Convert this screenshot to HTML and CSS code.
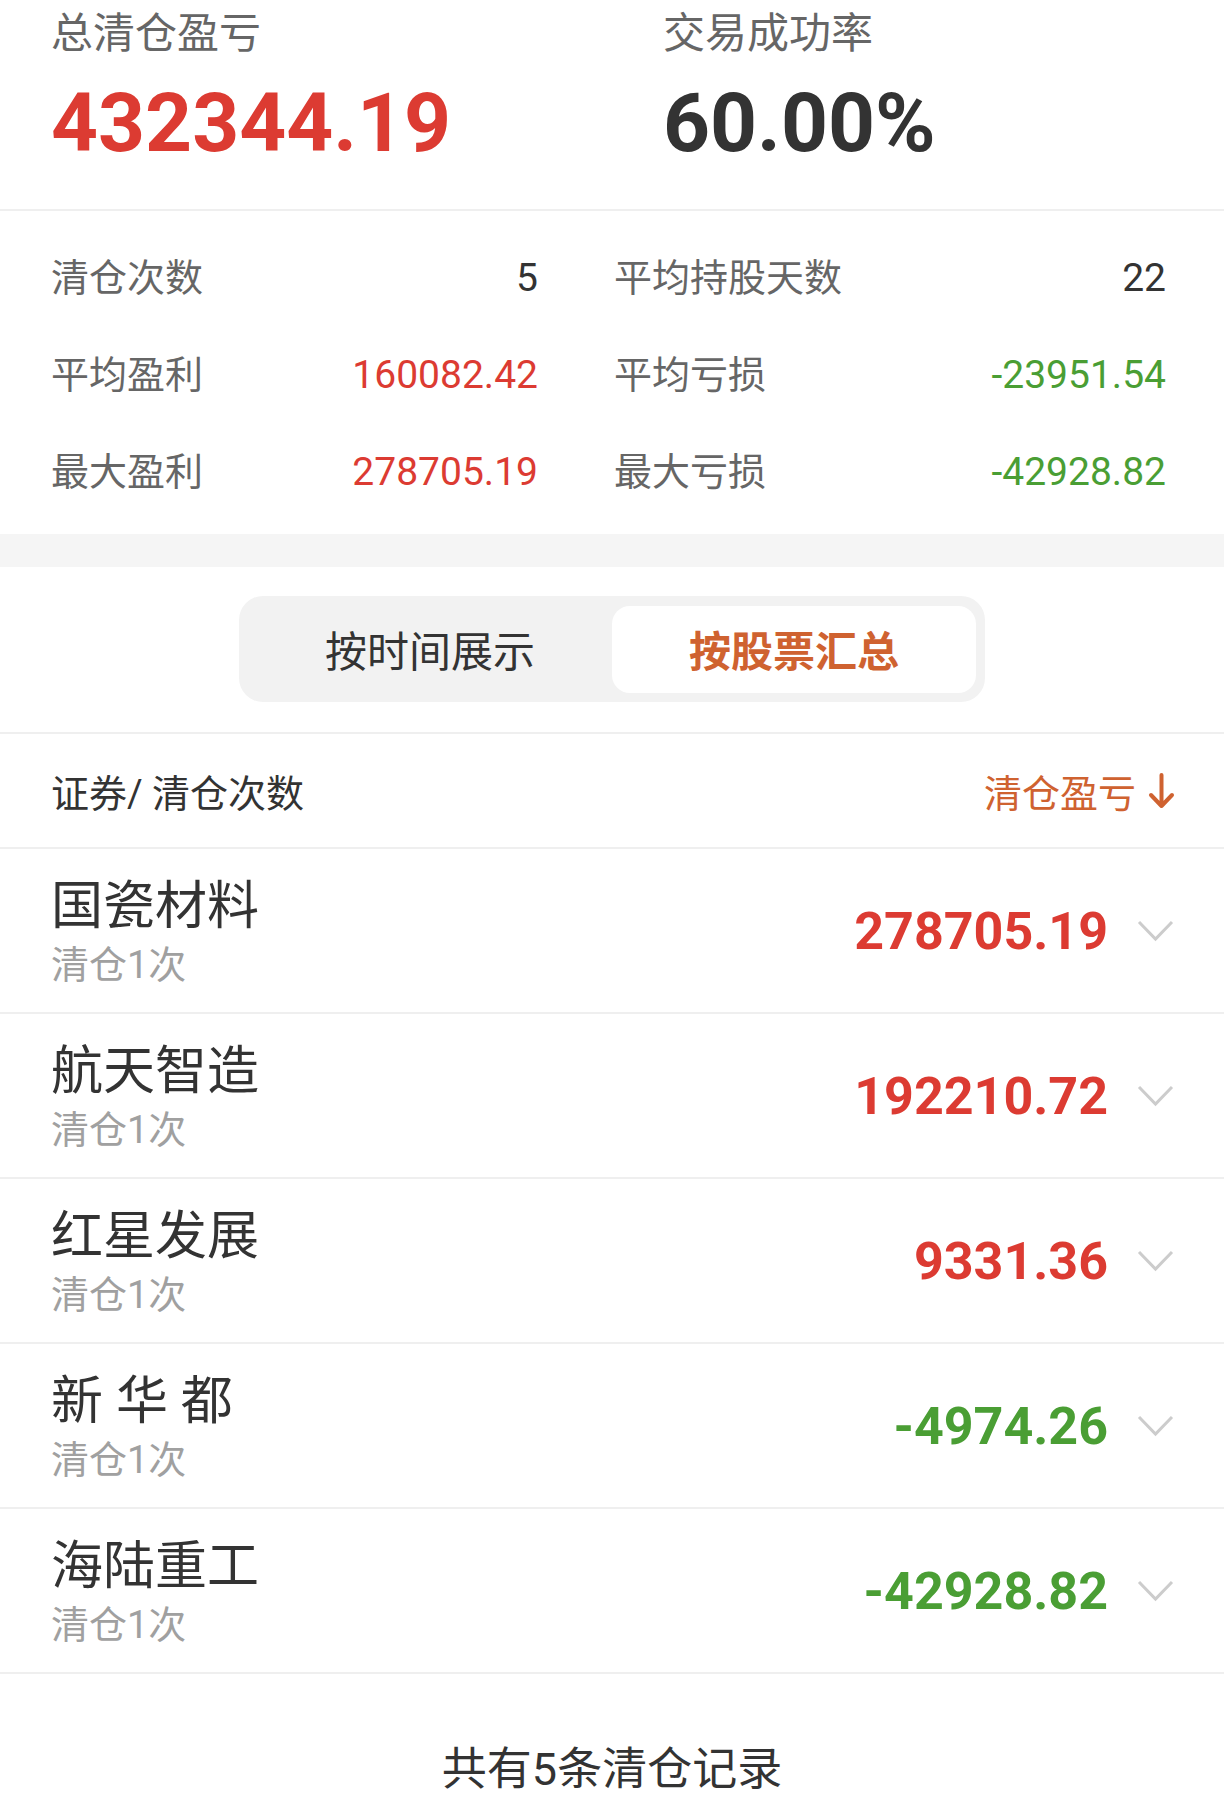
FILE: index.html
```html
<!DOCTYPE html>
<html lang="zh-CN">
<head>
  <meta charset="UTF-8" />
  <title>清仓记录</title>
  <link rel="stylesheet" href="styles.css">
</head>
<body>

<div id="summary">
  <div class="sum-item">
    <div class="sum-label">总清仓盈亏</div>
    <div class="sum-value up">432344.19</div>
  </div>
  <div class="sum-item">
    <div class="sum-label">交易成功率</div>
    <div class="sum-value">60.00%</div>
  </div>
</div>

<div id="stats">
  <div class="stat"><span class="stat-label">清仓次数</span><span class="stat-value">5</span></div>
  <div class="stat"><span class="stat-label">平均持股天数</span><span class="stat-value">22</span></div>
  <div class="stat"><span class="stat-label">平均盈利</span><span class="stat-value up">160082.42</span></div>
  <div class="stat"><span class="stat-label">平均亏损</span><span class="stat-value down">-23951.54</span></div>
  <div class="stat"><span class="stat-label">最大盈利</span><span class="stat-value up">278705.19</span></div>
  <div class="stat"><span class="stat-label">最大亏损</span><span class="stat-value down">-42928.82</span></div>
</div>

<div class="gap"></div>

<div id="tabs-wrap">
  <div id="tabs">
    <div class="tab">按时间展示</div>
    <div class="tab active">按股票汇总</div>
  </div>
</div>

<div id="list-head">
  <span>证券/ 清仓次数</span>
  <span class="sort">清仓盈亏
    <svg class="arrow" width="27" height="36" viewBox="0 0 27 36">
      <path d="M13.5 2 V33 M3 22 L13.5 33 L24 22" fill="none" stroke="#cf6230" stroke-width="4" stroke-linecap="round" stroke-linejoin="round"/>
    </svg>
  </span>
</div>

<div id="list"></div>

<div id="footer">共有5条清仓记录</div>

<script>
  const rows = [
    { name: "国瓷材料", times: 1, pl: "278705.19" },
    { name: "航天智造", times: 1, pl: "192210.72" },
    { name: "红星发展", times: 1, pl: "9331.36" },
    { name: "新 华 都", times: 1, pl: "-4974.26" },
    { name: "海陆重工", times: 1, pl: "-42928.82" }
  ];

  const list = document.getElementById("list");

  rows.forEach(r => {
    const row = document.createElement("div");
    row.className = "row";
    const cls = r.pl.startsWith("-") ? "down" : "up";
    row.innerHTML = `
      <div class="row-left">
        <div class="row-name">${r.name}</div>
        <div class="row-sub">清仓${r.times}次</div>
      </div>
      <div class="row-right">
        <span class="row-pl ${cls}">${r.pl}</span>
        <svg class="chev" width="37" height="22" viewBox="0 0 37 22">
          <path d="M2 2 L18.5 19 L35 2" fill="none" stroke="#cccccc" stroke-width="3"/>
        </svg>
      </div>
    `;
    list.appendChild(row);
  });
</script>

</body>
</html>
```

FILE: styles.css
```css
body {
  margin: 0;
  font-family: Roboto, "Noto Sans CJK SC", sans-serif;
  background: #fff;
  color: #333;
}
.up { color: #dc3b32; }
.down { color: #4a9e34; }

#summary {
  display: grid;
  grid-template-columns: 1fr 1fr;
  padding: 4px 0 41px;
  border-bottom: 2px solid #efefef;
}
.sum-item {
  padding-left: 51px;
}
.sum-label {
  font-size: 42px;
  line-height: 60px;
  color: #666;
}
.sum-value {
  margin-top: 14px;
  font-size: 82px;
  line-height: 90px;
  font-weight: bold;
  color: #333;
}
.sum-value.up { color: #dc3b32; }

#stats {
  display: grid;
  grid-template-columns: 487px 1fr;
  column-gap: 76px;
  padding: 19px 58px 13px 51px;
}
.stat {
  display: flex;
  justify-content: space-between;
  line-height: 97px;
}
.stat-label {
  font-size: 38px;
  color: #666;
}
.stat-value {
  font-size: 39px;
}

.gap {
  height: 33px;
  background: #f5f5f5;
}

#tabs-wrap {
  padding: 29px 0 30px;
  border-bottom: 2px solid #efefef;
}
#tabs {
  width: 728px;
  margin: 0 auto;
  padding: 10px 9px 9px;
  display: flex;
  background: #f2f2f2;
  border-radius: 24px;
}
.tab {
  flex: 1;
  height: 81px;
  padding-top: 6px;
  line-height: 81px;
  text-align: center;
  font-size: 42px;
  color: #333;
  border-radius: 18px;
}
.tab.active {
  background: #fff;
  color: #cf6230;
  font-weight: bold;
}

#list-head {
  display: flex;
  justify-content: space-between;
  align-items: center;
  height: 113px;
  padding: 0 49px 0 51px;
  font-size: 38px;
  border-bottom: 2px solid #efefef;
}
.sort {
  display: flex;
  align-items: center;
  gap: 12px;
  color: #cf6230;
}

.row {
  display: flex;
  justify-content: space-between;
  align-items: center;
  padding: 28.5px 50px 18.5px 51px;
  border-bottom: 2px solid #efefef;
}
.row-name {
  font-size: 52px;
  line-height: 58px;
  color: #333;
}
.row-sub {
  font-size: 38px;
  line-height: 58px;
  color: #a0a0a0;
}
.row-right {
  display: flex;
  align-items: center;
  gap: 29px;
  margin-bottom: 9px;
}
.row-pl {
  font-size: 52px;
  font-weight: bold;
}

#footer {
  margin-top: 66px;
  text-align: center;
  font-size: 45px;
  line-height: 60px;
  color: #333;
}
```
